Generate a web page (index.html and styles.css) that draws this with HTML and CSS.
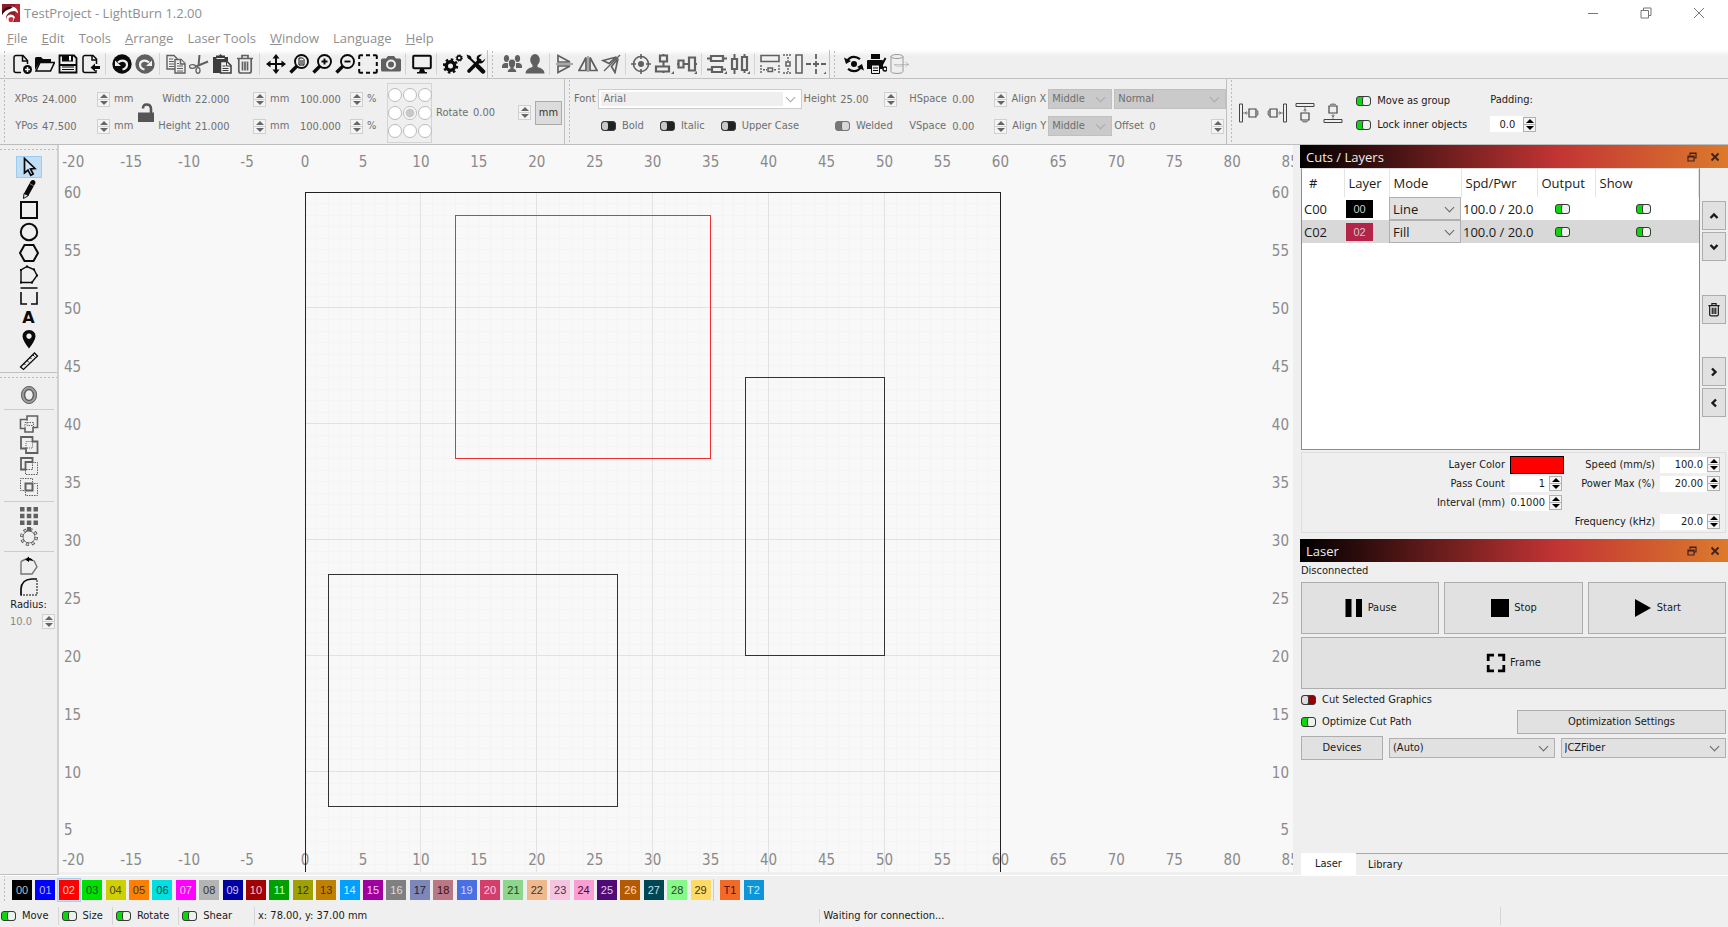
FILE: index.html
```html
<!DOCTYPE html>
<html lang="en">
<head>
  <meta charset="UTF-8" />
  <meta name="viewport" content="width=device-width, initial-scale=1.0" />
  <title>TestProject - LightBurn 1.2.00</title>
  <link rel="stylesheet" href="styles.css">
</head>
<body>
  <!-- icon sprite -->
  <svg class="sprite" aria-hidden="true">
    <symbol id="i-new" viewBox="0 0 20 20"><path d="M9 18.5H4a2 2 0 0 1-2-2v-13a2 2 0 0 1 2-2h7l4.5 5V10M10.5 1.5V7H15" fill="none" stroke="currentColor" stroke-width="1.5"/><circle cx="15.5" cy="15.5" r="4.5" fill="currentColor"/><path d="M15.5 13v5M13 15.5h5" stroke="#efefef" stroke-width="1.5"/></symbol>
    <symbol id="i-open" viewBox="0 0 20 20"><path d="M0 16V4.500q0-1.500 1.500-1.500H6l2 2h8v3H5z" fill="currentColor"/><path d="M1 17 5 8.500H19.500L15.500 17z" fill="none" stroke="currentColor" stroke-width="1.600"/></symbol>
    <symbol id="i-save" viewBox="0 0 20 20"><path d="M1.500 1.500H16l2.500 2.500v14.500h-17z" fill="none" stroke="currentColor" stroke-width="1.800"/><path d="M4 1h11v6.500H4zM1.500 10h17v2h-17z" fill="currentColor"/><path d="M11 2h2v4.500h-2z" fill="#fff"/><path d="M4 13h12M4 15.500h12" stroke="currentColor"/></symbol>
    <symbol id="i-import" viewBox="0 0 20 20"><path d="M15 16v2.500H4a2 2 0 0 1-2-2v-13a2 2 0 0 1 2-2h8L15.500 5v5M11 1.500V6h4" fill="none" stroke="currentColor" stroke-width="1.500"/><path d="M9.500 13.500 14 9.500v2.500h5v3h-5v2.500z" fill="currentColor"/></symbol>
    <symbol id="i-undo" viewBox="0 0 20 20"><circle cx="10" cy="10" r="9.700" fill="currentColor"/><path d="M6 8.500c4-3.500 9-1.500 9 2 0 3-2 4.500-4.500 5" fill="none" stroke="#efefef" stroke-width="2.200"/><path d="M3 6.500V12h6z" fill="#efefef"/></symbol>
    <symbol id="i-redo" viewBox="0 0 20 20"><circle cx="10" cy="10" r="9.700" fill="currentColor"/><path d="M14 8.500c-4-3.500-9-1.500-9 2 0 3 2 4.500 4.500 5" fill="none" stroke="#efefef" stroke-width="2.200"/><path d="M17 6.500V12h-6z" fill="#efefef"/></symbol>
    <symbol id="i-copy" viewBox="0 0 20 20"><g fill="#efefef" stroke="currentColor" stroke-width="1.400"><path d="M1 1.500h7l3 3V15H1z"/><path d="M9 5.500h6l4 4v9.500H9z"/><path d="M14.500 5.500V10H19"/></g><path d="M3 5h4M3 7.500h5M3 10h5M3 12.500h5M11 12h6M11 14.500h6M11 17h6M11 9.500h2" stroke="currentColor"/></symbol>
    <symbol id="i-cut" viewBox="0 0 20 20"><path d="M10.500 1 9.500 12M19 7.500 7 12.500" stroke="currentColor" stroke-width="2"/><ellipse cx="3.500" cy="12.500" rx="3" ry="1.800" fill="none" stroke="currentColor" stroke-width="1.300"/><ellipse cx="9" cy="16.500" rx="2" ry="2.800" fill="none" stroke="currentColor" stroke-width="1.300"/></symbol>
    <symbol id="i-paste" viewBox="0 0 20 20"><path d="M1 3h3V1.500h3L8.500 0 10 1.500h3V3h3v4H8v12H1z" fill="currentColor"/><path d="M4.500 4.500h8" stroke="#efefef"/><path d="M8.500 7.500H15l4 4V19H8.500z" fill="#efefef" stroke="currentColor" stroke-width="1.500"/><path d="M14.500 7.500V12H19M10.500 12h3M10.500 14.500h6M10.500 16.500h6" fill="none" stroke="currentColor"/></symbol>
    <symbol id="i-trash" viewBox="0 0 20 20"><path d="M2 4.500h16M7 4V1.500h6V4M3.800 5v12a2 2 0 0 0 2 2h8.400a2 2 0 0 0 2-2V5M7.500 7.500v9M10 7.500v9M12.500 7.500v9" fill="none" stroke="currentColor" stroke-width="1.700"/></symbol>
    <symbol id="i-move" viewBox="0 0 20 20"><path d="M10 2v16M2 10h16" stroke="currentColor" stroke-width="2"/><path d="m10 0 3.500 4.500h-7zM10 20l-3.500-4.500h7zM0 10l4.500-3.500v7zM20 10l-4.500 3.500v-7z" fill="currentColor"/></symbol>
    <symbol id="i-zoomfit" viewBox="0 0 20 20"><circle cx="12.500" cy="7.500" r="6.500" fill="none" stroke="currentColor" stroke-width="1.900"/><path d="M8 12 1.500 18.500" stroke="currentColor" stroke-width="3.400"/><path d="M10 4h3.500L15 5.500V11h-5zM11 7h3M11 9h3" fill="none" stroke="currentColor"/></symbol>
    <symbol id="i-zoomin" viewBox="0 0 20 20"><circle cx="12.500" cy="7.500" r="6.500" fill="none" stroke="currentColor" stroke-width="1.900"/><path d="M8 12 1.500 18.500" stroke="currentColor" stroke-width="3.400"/><path d="M9.500 7.500h6M12.500 4.500v6" stroke="currentColor" stroke-width="1.900"/></symbol>
    <symbol id="i-zoomout" viewBox="0 0 20 20"><circle cx="12.500" cy="7.500" r="6.500" fill="none" stroke="currentColor" stroke-width="1.900"/><path d="M8 12 1.500 18.500" stroke="currentColor" stroke-width="3.400"/><path d="M9.500 7.500h6" stroke="currentColor" stroke-width="1.900"/></symbol>
    <symbol id="i-marquee" viewBox="0 0 20 20"><path d="M1.200 5V2.200q0-1 1-1H5M8 1.200h4M15 1.200h2.800q1 0 1 1V5M18.800 8v4M18.800 15v2.800q0 1-1 1H15M12 18.800H8M5 18.800H2.200q-1 0-1-1V15M1.200 12V8" fill="none" stroke="currentColor" stroke-width="2"/></symbol>
    <symbol id="i-camera" viewBox="0 0 20 20"><path d="M0 6q0-1.500 1.500-1.500H5L7 2h6l2 2.500h3.500Q20 4.500 20 6v10q0 1.500-1.500 1.500h-17Q0 17.500 0 16z" fill="currentColor"/><circle cx="10" cy="10.500" r="4" fill="currentColor" stroke="#efefef" stroke-width="2"/></symbol>
    <symbol id="i-monitor" viewBox="0 0 20 20"><rect x="1.200" y="1.800" width="17.600" height="12.400" rx="1" fill="none" stroke="currentColor" stroke-width="2"/><path d="M8 15h4l1 3h2v1.500H5V18h2z" fill="currentColor"/></symbol>
    <symbol id="i-gears" viewBox="0 0 20 20"><circle cx="7.500" cy="12" r="4.200" fill="none" stroke="currentColor" stroke-width="3.400"/><circle cx="7.500" cy="12" r="6.600" fill="none" stroke="currentColor" stroke-width="2.200" stroke-dasharray="2.600 2.584"/><circle cx="16.200" cy="4" r="2.100" fill="none" stroke="currentColor" stroke-width="1.700"/><circle cx="16.200" cy="4" r="3.200" fill="none" stroke="currentColor" stroke-width="1" stroke-dasharray="1.200 1.313"/></symbol>
    <symbol id="i-tools" viewBox="0 0 20 20"><path d="M2 2.500 17.500 17.500" stroke="currentColor" stroke-width="2"/><path d="M12 12.500 17 17.500" stroke="currentColor" stroke-width="4.500" stroke-linecap="round"/><path d="M3 17 13.500 6.500" stroke="currentColor" stroke-width="3.600" stroke-linecap="round"/><path d="M19.500 4.500 16.500 7 13.500 6.500 13 3.500 16 .5Q11 0 10.500 4.500L12 9q5 2 7.500-4.500M.5.5l4 1.500 1 2-1.500 1.500-2-1z" fill="currentColor"/></symbol>
    <symbol id="i-users" viewBox="0 0 20 20"><g fill="currentColor"><ellipse cx="4.500" cy="4.500" rx="2.600" ry="3.500"/><ellipse cx="15.500" cy="4.500" rx="2.600" ry="3.500"/><path d="M0 12.500Q0 9.500 3 9h3v5H0zM20 12.500q0-3-3-3.500h-3v5h6z"/></g><path d="M5 18.500q0-3.500 3.300-4.300-2-2.200-2-5Q6.300 5 10 5t3.700 4.200q0 2.800-2 5Q15 15 15 18.500z" fill="currentColor" stroke="#efefef"/></symbol>
    <symbol id="i-user" viewBox="0 0 20 20"><ellipse cx="10" cy="5.800" rx="4.800" ry="5.800" fill="currentColor"/><path d="M7.500 10h5v3q7 1.500 7 6.500H.5q0-5 7-6.500z" fill="currentColor"/></symbol>
    <symbol id="i-flipv" viewBox="0 0 20 20"><path d="M3 1.500 15 8H3zM3 18.500 15 12H3z" fill="none" stroke="currentColor" stroke-width="1.700"/><path d="M1 10h17" stroke="currentColor"/></symbol>
    <symbol id="i-fliph" viewBox="0 0 20 20"><path d="M8 3.500V16.500H1zM12 3.500V16.500h7z" fill="none" stroke="currentColor" stroke-width="1.700"/><path d="M10 2v16" stroke="currentColor"/></symbol>
    <symbol id="i-mirror" viewBox="0 0 20 20"><path d="M2 6.500 15.500 3 8 9.500zM17 4.500 14 18.500l-3.500-6z" fill="none" stroke="currentColor" stroke-width="1.700"/><path d="M19 1 3 17" stroke="currentColor" stroke-width="1.300"/></symbol>
    <symbol id="i-target" viewBox="0 0 20 20"><circle cx="10" cy="10" r="7.500" fill="none" stroke="currentColor" stroke-width="1.600"/><circle cx="10" cy="10" r="3" fill="currentColor"/><path d="M10 0v5M10 15v5M0 10h5M15 10h5" stroke="currentColor" stroke-width="1.600"/></symbol>
    <symbol id="i-alignc" viewBox="0 0 20 20"><path d="M6 1.500h7v6H6zM2 12.500h13v5H2z" fill="none" stroke="currentColor" stroke-width="2.200"/><path d="M9.500 0v2M9.500 7v6M9.500 17v2" stroke="currentColor" stroke-width="2"/><path d="M17 20h3v-3z" fill="currentColor"/></symbol>
    <symbol id="i-alignm" viewBox="0 0 20 20"><path d="M1.500 6.500h5v7h-5zM12 3.500h6v13h-6z" fill="none" stroke="currentColor" stroke-width="2.200"/><path d="M0 10h1.500M6.500 10H12M18 10h2" stroke="currentColor" stroke-width="2"/><path d="M17 20h3v-3z" fill="currentColor"/></symbol>
    <symbol id="i-distv" viewBox="0 0 20 20"><path d="M4 2h12v5H4zM5 13h10v5H5z" fill="none" stroke="currentColor" stroke-width="2.200"/><path d="M0 4.500h4M16 4.500h4M0 15.500h5M15 15.500h4" stroke="currentColor" stroke-width="2"/><path d="M17 20h3v-3z" fill="currentColor"/></symbol>
    <symbol id="i-disth" viewBox="0 0 20 20"><path d="M2 5h5v10H2zM12 3h5v13h-5z" fill="none" stroke="currentColor" stroke-width="2.200"/><path d="M4.500 0v5M4.500 15v5M14.500 0v3M14.500 16v3" stroke="currentColor" stroke-width="2"/><path d="M17 20h3v-3z" fill="currentColor"/></symbol>
    <symbol id="i-samew" viewBox="0 0 20 20"><path d="M1 1.500h18v6H1z" fill="none" stroke="currentColor" stroke-width="1.600"/><path d="M8 14h4.500v3.500H8z" fill="none" stroke="currentColor" stroke-width="1.500"/><path d="M1 11v9M19 11v9M3 15.800h4M14 15.800h3" stroke="currentColor" stroke-width="1.400" stroke-dasharray="2 1"/></symbol>
    <symbol id="i-sameh" viewBox="0 0 20 20"><path d="M13 1h6v18h-6z" fill="none" stroke="currentColor" stroke-width="1.600"/><path d="M3 8h4v4H3z" fill="none" stroke="currentColor" stroke-width="1.500"/><path d="M0 1h9M0 19h9M5 3v4M5 14v4" stroke="currentColor" stroke-width="1.400" stroke-dasharray="2 1"/></symbol>
    <symbol id="i-origin" viewBox="0 0 20 20"><path d="M10 0v5M10 7v6M10 15v5M0 10h5M7 10h6M15 10h5" stroke="currentColor" stroke-width="1.800"/><path d="M17.500 20H20v-2.500z" fill="currentColor"/></symbol>
    <symbol id="i-rotary" viewBox="0 0 20 20"><circle cx="10" cy="10" r="3" fill="currentColor"/><path d="M2.500 8Q5 2.800 10 2.800q3 0 6 2.400M17.500 12q-2.500 5.200-7.500 5.200-3 0-6-2.400" fill="none" stroke="currentColor" stroke-width="2.200"/><path d="M0 3.500 2 10l5-3zM20 16.500 18 10l-5 3z" fill="currentColor"/></symbol>
    <symbol id="i-printcut" viewBox="0 0 20 20"><path d="M4 0h9v5H4zM1 6h14q1 0 1 1v8H0V7q0-1 1-1z" fill="currentColor"/><path d="M4.500 11h8v8.500h-8z" fill="#efefef" stroke="currentColor"/><path d="M6 14h5M6 16.500h5" stroke="currentColor"/><path d="m18.500 4-5 9.500" stroke="currentColor" stroke-width="2"/><circle cx="18" cy="15" r="2" fill="none" stroke="currentColor" stroke-width="1.400"/></symbol>
    <symbol id="i-cyl" viewBox="0 0 20 20"><g fill="none" stroke="currentColor"><ellipse cx="7" cy="2.500" rx="6" ry="2"/><path d="M1 2.500v15q0 2 6 2t6-2v-15"/><path d="M4 10.500h15M15 8l4 2.500-4 2M4 10.500q3 3 9 1" opacity=".5"/></g></symbol>
    <symbol id="i-select" viewBox="0 0 20 20"><path d="M5.500 1.500V16l3.500-3 2.800 5.300 2.400-1.300-2.700-5 4.500-.5z" fill="#cfe6fa" stroke="currentColor" stroke-width="1.700"/></symbol>
    <symbol id="i-pencil" viewBox="0 0 20 20"><path d="m5 14.500 6.500-12q1-2 3-1.500t2 3l-7 12.500z" fill="currentColor"/><path d="m5 14.500-.5 5 5-3z" fill="none" stroke="currentColor"/><path d="m10.500 4.500 4.500 2.500" stroke="#efefef" stroke-width=".5"/></symbol>
    <symbol id="i-rect" viewBox="0 0 20 20"><path d="M2 2h16v16H2z" fill="none" stroke="currentColor" stroke-width="2"/></symbol>
    <symbol id="i-ellipse" viewBox="0 0 20 20"><circle cx="10" cy="10" r="8.200" fill="none" stroke="currentColor" stroke-width="2"/></symbol>
    <symbol id="i-hex" viewBox="0 0 20 20"><path d="M5.500 2h9l4.500 8-4.500 8h-9L1 10z" fill="none" stroke="currentColor" stroke-width="2"/></symbol>
    <symbol id="i-nodes" viewBox="0 0 20 20"><path d="M2 5v12.500h11L18 10.500l-3-6-7-3z" fill="none" stroke="currentColor" stroke-width="1.400"/><path d="M1 4h2v2H1zM7 .5h2v2H7zM14 3.500h2v2h-2zM17 9.500h2v2h-2zM12 16.500h2v2h-2zM1 16.500h2v2H1z" fill="currentColor"/></symbol>
    <symbol id="i-break" viewBox="0 0 20 20"><path d="M1.500 2h17M2 6v12h6M12 18h6V6" fill="none" stroke="currentColor" stroke-width="1.600"/></symbol>
    <symbol id="i-pin" viewBox="0 0 20 20"><path d="M10 1q6.500.5 6.500 6.500Q16 12 10 19.500 4 12 3.500 7.500 3.500 1.500 10 1zm0 3.500a2.700 2.700 0 1 0 .01 0z" fill="currentColor" fill-rule="evenodd"/></symbol>
    <symbol id="i-ruler" viewBox="0 0 20 20"><path d="M1.500 16 15.500 2l3 3L4.500 18.500z" fill="none" stroke="currentColor" stroke-width="1.300"/><path d="m5 12.500 1.500 1.500M8 9.500l2 2M11 6.500l1.500 1.500M14 4l1.500 1.500" stroke="currentColor"/></symbol>
    <symbol id="i-offset" viewBox="0 0 20 20"><ellipse cx="10" cy="10" rx="6" ry="7" fill="none" stroke="#a0a0a0" stroke-width="4"/><ellipse cx="10" cy="10" rx="7.500" ry="8.500" fill="none" stroke="currentColor"/><ellipse cx="10" cy="10" rx="4.500" ry="5.500" fill="none" stroke="currentColor" stroke-width="1.500"/></symbol>
    <symbol id="i-weld" viewBox="0 0 20 20"><path d="M8 2h10.500v11.500H14V18H6v-3.500H1.500V5.500H8z" fill="none" stroke="currentColor" stroke-width="1.600"/><path d="M6 14V8.500h8.500V13.500M8 5.500v6h6" fill="none" stroke="currentColor" stroke-dasharray="1.500 1"/></symbol>
    <symbol id="i-union" viewBox="0 0 20 20"><path d="M2 2h11.500v4.500h5V18H7v-4.500H2z" fill="none" stroke="currentColor" stroke-width="1.800"/><path d="M7 13V6.500h6.500V13z" fill="none" stroke="currentColor" stroke-dasharray="1 1"/></symbol>
    <symbol id="i-subtract" viewBox="0 0 20 20"><path d="M2 2h11.500v4H6.500v7.500H2z" fill="none" stroke="currentColor" stroke-width="1.800"/><path d="M13 6.500h5.500v12H6.500v-5h7V6.500" fill="none" stroke="currentColor" stroke-dasharray="1.500 1"/></symbol>
    <symbol id="i-intersect" viewBox="0 0 20 20"><path d="M6.500 6.500h7v7h-7z" fill="none" stroke="currentColor" stroke-width="2"/><path d="M5 13.500H1.500v-12h12V5M15 6.500h3.500v12h-12V15" fill="none" stroke="currentColor" stroke-dasharray="1.500 1"/></symbol>
    <symbol id="i-grid" viewBox="0 0 20 20"><path d="M1 1h4.500v4.500H1zM7.800 1h4.500v4.500H7.800zM14.500 1H19v4.500h-4.500zM1 7.800h4.500v4.500H1zM7.800 7.800h4.500v4.500H7.800zM14.500 7.800H19v4.500h-4.500zM1 14.500h4.500V19H1zM7.800 14.500h4.500V19H7.800zM14.500 14.500H19V19h-4.500z" fill="currentColor"/></symbol>
    <symbol id="i-circular" viewBox="0 0 20 20"><circle cx="10" cy="10" r="6" fill="none" stroke="currentColor" stroke-width=".8"/><circle cx="10" cy="10" r="7.300" fill="none" stroke="currentColor" stroke-width="3.400" stroke-dasharray="3 2.734"/><circle cx="10" cy="10" r="7.300" fill="none" stroke="#efefef" stroke-width="1.400" stroke-dasharray="1.600 4.134" stroke-dashoffset="-.7"/><path d="M8 0h4v4H8z" fill="currentColor"/></symbol>
    <symbol id="i-start" viewBox="0 0 20 20"><path d="M2 5.500V18h11l5-7-3-6.500M2 5.500 7 3" fill="none" stroke="#777" stroke-width="1.400"/><path d="M6 3.500 10 .5V2q3 0 5 3.500-2-1.500-5-1V6z" fill="#000"/></symbol>
    <symbol id="i-radius" viewBox="0 0 20 20"><path d="M2 18.500V12Q2.500 2.500 12.500 2H18" fill="none" stroke="currentColor" stroke-width="1.700"/><path d="M18 3v15H2" fill="none" stroke="currentColor" stroke-dasharray="2 1"/></symbol>
    <symbol id="i-lock" viewBox="0 0 16 20"><path d="M0 9.500h16V19H0z" fill="currentColor"/><path d="M5 5.500Q5 1.500 8.500 1.500 13 1.500 13 6v4" fill="none" stroke="currentColor" stroke-width="2.600"/></symbol>
    <symbol id="i-dock" viewBox="0 0 20 20"><g fill="none" stroke="currentColor"><path d="M.5 1h3v18h-3z"/><path d="M10 6h7v8h-7z" stroke-width="1.200"/><path d="M4 10h5M8 8.500 6 10l2 1.500M18.500 7v6M20 8v4" opacity=".6"/></g></symbol>
    <symbol id="i-pause" viewBox="0 0 20 20"><path d="M1.500 1h6v18h-6zM12 1h6v18h-6z" fill="currentColor"/></symbol>
    <symbol id="i-stop" viewBox="0 0 20 20"><path d="M1 1h18v18H1z" fill="currentColor"/></symbol>
    <symbol id="i-play" viewBox="0 0 20 20"><path d="M2 1v18l16-9z" fill="currentColor"/></symbol>
    <symbol id="i-frame" viewBox="0 0 20 20"><path d="M2.200 8V2.200H8M12 2.200h5.800V8M17.800 12v5.800H12M8 17.800H2.200V12" fill="none" stroke="currentColor" stroke-width="2.800"/></symbol>
    <symbol id="i-float" viewBox="0 0 10 10"><path d="M3 3V1h6v5H7M1 4h6v5H1zM1 5h6M3 1.500h6" fill="none" stroke="currentColor" stroke-width="1.200"/></symbol>
    <symbol id="i-close" viewBox="0 0 10 10"><path d="m1.500 1.500 7 7M8.500 1.500l-7 7" stroke="currentColor" stroke-width="1.800"/></symbol>
    <symbol id="i-chev" viewBox="0 0 10 10"><path d="M1.500 7 5 3.500 8.500 7" fill="none" stroke="currentColor" stroke-width="2.400"/></symbol>
  </svg>

  <header class="titlebar">
    <svg class="logo" viewBox="0 0 18 18"><path d="M0 0h18v18H0z" fill="#8c1c2c"/><path d="M13 0h5v18h-5z" fill="#b8222e"/><path d="M0 11Q2 4 8 3.500l2-1q6 1 6 7l-3-2.500-4 .5Q5 9 4 13q0 3 2 5H0z" fill="#fff"/><path d="M0 7q4-5.500 11-4L8 5Q3 6 0 11z" fill="#3a0a12"/><path d="M5 18q-2-4 1-6.500Q10 9 13 13l-2 5z" fill="#fff"/><path d="M7.500 18q-2-3 0-4.500 3-1.500 4 1l-1 3.500z" fill="#d22f35"/></svg>
    <span class="app-title">TestProject - LightBurn 1.2.00</span>
    <button class="win" aria-label="Minimize"><svg viewBox="0 0 12 12"><path d="M1 6.500h10"/></svg></button>
    <button class="win" aria-label="Restore"><svg viewBox="0 0 12 12"><path d="M1 3.500h7.500V11H1zM3.500 3.500v-2.500H11v7.500H8.500"/></svg></button>
    <button class="win" aria-label="Close"><svg viewBox="0 0 12 12"><path d="m1 1 10 10M11 1 1 11"/></svg></button>
  </header>

  <nav class="menubar">
    <a href="#"><u>F</u>ile</a><a href="#"><u>E</u>dit</a><a href="#">Tools</a><a href="#"><u>A</u>rrange</a><a href="#">Laser Tools</a><a href="#"><u>W</u>indow</a><a href="#">Language</a><a href="#"><u>H</u>elp</a>
  </nav>

  <div class="toolbars">
    <div class="toolbar main-tools">
      <button aria-label="New"><svg><use href="#i-new"/></svg></button>
      <button aria-label="Open"><svg><use href="#i-open"/></svg></button>
      <button aria-label="Save"><svg><use href="#i-save"/></svg></button>
      <button aria-label="Import"><svg><use href="#i-import"/></svg></button>
      <i class="sep"></i>
      <button aria-label="Undo"><svg><use href="#i-undo"/></svg></button>
      <button class="dim" aria-label="Redo"><svg><use href="#i-redo"/></svg></button>
      <i class="sep"></i>
      <button class="dim" aria-label="Copy"><svg><use href="#i-copy"/></svg></button>
      <button class="dim" aria-label="Cut"><svg><use href="#i-cut"/></svg></button>
      <button class="dark" aria-label="Paste"><svg><use href="#i-paste"/></svg></button>
      <button class="dim" aria-label="Delete"><svg><use href="#i-trash"/></svg></button>
      <i class="sep"></i>
      <button aria-label="Pan"><svg><use href="#i-move"/></svg></button>
      <button aria-label="Zoom to page"><svg><use href="#i-zoomfit"/></svg></button>
      <button aria-label="Zoom in"><svg><use href="#i-zoomin"/></svg></button>
      <button aria-label="Zoom out"><svg><use href="#i-zoomout"/></svg></button>
      <button aria-label="Frame selection"><svg><use href="#i-marquee"/></svg></button>
      <button class="dim" aria-label="Camera"><svg><use href="#i-camera"/></svg></button>
      <i class="sep"></i>
      <button aria-label="Preview"><svg><use href="#i-monitor"/></svg></button>
      <i class="sep"></i>
      <button aria-label="Settings"><svg><use href="#i-gears"/></svg></button>
      <button aria-label="Device settings"><svg><use href="#i-tools"/></svg></button>
    </div>
    <div class="toolbar arrange-tools">
      <button aria-label="Group"><svg><use href="#i-users"/></svg></button>
      <button aria-label="Ungroup"><svg><use href="#i-user"/></svg></button>
      <i class="sep"></i>
      <button aria-label="Flip vertical"><svg><use href="#i-flipv"/></svg></button>
      <button aria-label="Flip horizontal"><svg><use href="#i-fliph"/></svg></button>
      <button aria-label="Mirror across line"><svg><use href="#i-mirror"/></svg></button>
      <i class="sep"></i>
      <button aria-label="Align centers"><svg><use href="#i-target"/></svg></button>
      <button aria-label="Align vertical"><svg><use href="#i-alignc"/></svg></button>
      <button aria-label="Align horizontal"><svg><use href="#i-alignm"/></svg></button>
      <i class="sep"></i>
      <button aria-label="Distribute vertical"><svg><use href="#i-distv"/></svg></button>
      <button aria-label="Distribute horizontal"><svg><use href="#i-disth"/></svg></button>
      <i class="sep"></i>
      <button aria-label="Same width"><svg><use href="#i-samew"/></svg></button>
      <button aria-label="Same height"><svg><use href="#i-sameh"/></svg></button>
      <button aria-label="Move to origin"><svg><use href="#i-origin"/></svg></button>
    </div>
    <div class="toolbar laser-tools">
      <button aria-label="Rotary"><svg><use href="#i-rotary"/></svg></button>
      <button aria-label="Print and cut"><svg><use href="#i-printcut"/></svg></button>
      <button class="pale" aria-label="Cylinder"><svg><use href="#i-cyl"/></svg></button>
    </div>
  </div>

  <div class="props">
    <section class="prop-block numeric">
      <div class="pos">
        <label for="xpos">XPos</label><div class="num"><input id="xpos" value="24.000"></div><span>mm</span>
        <label for="ypos">YPos</label><div class="num"><input id="ypos" value="47.500"></div><span>mm</span>
      </div>
      <button class="lock" aria-label="Lock aspect ratio"><svg><use href="#i-lock"/></svg></button>
      <div class="size">
        <label for="w">Width</label><div class="num"><input id="w" value="22.000"></div><span>mm</span><div class="num"><input aria-label="Width percent" value="100.000"></div><span>%</span>
        <label for="h">Height</label><div class="num"><input id="h" value="21.000"></div><span>mm</span><div class="num"><input aria-label="Height percent" value="100.000"></div><span>%</span>
      </div>
      <div class="anchors">
        <input type="radio" name="anchor" aria-label="Top left"><input type="radio" name="anchor" aria-label="Top"><input type="radio" name="anchor" aria-label="Top right">
        <input type="radio" name="anchor" aria-label="Left"><input type="radio" name="anchor" aria-label="Center" checked><input type="radio" name="anchor" aria-label="Right">
        <input type="radio" name="anchor" aria-label="Bottom left"><input type="radio" name="anchor" aria-label="Bottom"><input type="radio" name="anchor" aria-label="Bottom right">
      </div>
      <div class="rotate"><label for="rot">Rotate</label><div class="num"><input id="rot" value="0.00"></div></div>
      <button class="unit">mm</button>
    </section>

    <section class="prop-block text-props">
      <div class="font-col">
        <div class="line">
          <label for="font">Font</label>
          <div class="select font-select"><select id="font"><option>Arial</option></select></div>
          <label for="fh">Height</label><div class="num"><input id="fh" value="25.00"></div>
        </div>
        <div class="line checks">
          <label><input type="checkbox" class="tg off">Bold</label>
          <label><input type="checkbox" class="tg off">Italic</label>
          <label><input type="checkbox" class="tg off">Upper Case</label>
          <label class="welded"><input type="checkbox" class="tg gray" checked>Welded</label>
        </div>
      </div>
      <div class="spacing">
        <label for="hs">HSpace</label><div class="num"><input id="hs" value="0.00"></div>
        <label for="vs">VSpace</label><div class="num"><input id="vs" value="0.00"></div>
      </div>
      <div class="align">
        <label for="ax">Align X</label><div class="select muted"><select id="ax"><option>Middle</option></select></div>
        <div class="select muted"><select aria-label="Text mode"><option>Normal</option></select></div>
        <label for="ay">Align Y</label><div class="select muted"><select id="ay"><option>Middle</option></select></div>
        <div class="offset"><label for="off">Offset</label><div class="num"><input id="off" value="0"></div></div>
      </div>
    </section>

    <section class="prop-block dock-props">
      <button aria-label="Dock left"><svg><use href="#i-dock"/></svg></button>
      <button aria-label="Dock right" class="r180"><svg><use href="#i-dock"/></svg></button>
      <button aria-label="Dock top" class="r90"><svg><use href="#i-dock"/></svg></button>
      <button aria-label="Dock bottom" class="r270"><svg><use href="#i-dock"/></svg></button>
      <div class="dock-checks">
        <label><input type="checkbox" class="tg" checked>Move as group</label>
        <label><input type="checkbox" class="tg" checked>Lock inner objects</label>
      </div>
      <div class="padding">
        <label for="pad">Padding:</label>
        <div class="num white"><input id="pad" value="0.0"></div>
      </div>
    </section>
  </div>

  <main class="workspace">
    <aside class="side-tools">
      <div class="tool-list draw">
        <button class="active" aria-label="Select"><svg><use href="#i-select"/></svg></button>
        <button aria-label="Draw lines"><svg><use href="#i-pencil"/></svg></button>
        <button aria-label="Rectangle"><svg><use href="#i-rect"/></svg></button>
        <button aria-label="Ellipse"><svg><use href="#i-ellipse"/></svg></button>
        <button aria-label="Polygon"><svg><use href="#i-hex"/></svg></button>
        <button aria-label="Edit nodes"><svg><use href="#i-nodes"/></svg></button>
        <button aria-label="Trim shapes"><svg><use href="#i-break"/></svg></button>
        <button aria-label="Text" class="text-tool">A</button>
        <button aria-label="Position laser"><svg><use href="#i-pin"/></svg></button>
        <button aria-label="Measure"><svg><use href="#i-ruler"/></svg></button>
      </div>
      <div class="tool-list edit">
        <button aria-label="Offset shapes"><svg><use href="#i-offset"/></svg></button>
        <hr>
        <button aria-label="Weld"><svg><use href="#i-weld"/></svg></button>
        <button aria-label="Boolean union"><svg><use href="#i-union"/></svg></button>
        <button aria-label="Boolean subtract"><svg><use href="#i-subtract"/></svg></button>
        <button aria-label="Boolean intersection"><svg><use href="#i-intersect"/></svg></button>
        <hr>
        <button aria-label="Grid array"><svg><use href="#i-grid"/></svg></button>
        <button aria-label="Circular array"><svg><use href="#i-circular"/></svg></button>
        <hr>
        <button aria-label="Set start point"><svg><use href="#i-start"/></svg></button>
        <button aria-label="Radius"><svg><use href="#i-radius"/></svg></button>
        <label for="radius">Radius:</label>
        <div class="num"><input id="radius" value="10.0"></div>
      </div>
    </aside>

    <svg class="canvas" id="canvas"></svg>

    <aside class="docks">
      <h2 class="dock-title"><span>Cuts / Layers</span><button aria-label="Float"><svg><use href="#i-float"/></svg></button><button aria-label="Close"><svg><use href="#i-close"/></svg></button></h2>
      <div class="cuts">
        <div class="layer-box">
          <table class="layers">
            <colgroup><col class="c-id"><col class="c-layer"><col class="c-mode"><col class="c-spd"><col class="c-out"><col></colgroup>
            <tr><th>#</th><th>Layer</th><th>Mode</th><th>Spd/Pwr</th><th>Output</th><th>Show</th></tr>
            <tr>
              <td>C00</td><td><span class="chip black">00</span></td>
              <td><div class="select"><select aria-label="Mode C00"><option>Line</option></select></div></td>
              <td>100.0 / 20.0</td>
              <td class="mid"><input type="checkbox" class="tg" aria-label="Output C00" checked></td>
              <td class="show"><input type="checkbox" class="tg" aria-label="Show C00" checked></td>
            </tr>
            <tr class="current">
              <td>C02</td><td><span class="chip crimson">02</span></td>
              <td><div class="select"><select aria-label="Mode C02"><option>Fill</option></select></div></td>
              <td>100.0 / 20.0</td>
              <td class="mid"><input type="checkbox" class="tg" aria-label="Output C02" checked></td>
              <td class="show"><input type="checkbox" class="tg" aria-label="Show C02" checked></td>
            </tr>
          </table>
        </div>
        <div class="layer-buttons">
          <button aria-label="Move up"><svg><use href="#i-chev"/></svg></button>
          <button aria-label="Move down"><svg class="r180"><use href="#i-chev"/></svg></button>
          <button aria-label="Delete layer" class="del"><svg><use href="#i-trash"/></svg></button>
          <button aria-label="Next"><svg class="r90"><use href="#i-chev"/></svg></button>
          <button aria-label="Previous"><svg class="r270"><use href="#i-chev"/></svg></button>
        </div>
      </div>
      <div class="cut-form">
        <label for="lc">Layer Color</label><button id="lc" class="color" aria-label="Layer Color"></button>
        <label for="spd">Speed (mm/s)</label><div class="num white"><input id="spd" value="100.0"></div>
        <label for="pc">Pass Count</label><div class="num white"><input id="pc" value="1"></div>
        <label for="pw">Power Max (%)</label><div class="num white"><input id="pw" value="20.00"></div>
        <label for="iv">Interval (mm)</label><div class="num white"><input id="iv" value="0.1000"></div>
        <label for="fq" class="freq">Frequency (kHz)</label><div class="num white freq-num"><input id="fq" value="20.0"></div>
      </div>

      <h2 class="dock-title"><span>Laser</span><button aria-label="Float"><svg><use href="#i-float"/></svg></button><button aria-label="Close"><svg><use href="#i-close"/></svg></button></h2>
      <div class="laser">
        <p>Disconnected</p>
        <div class="run">
          <button class="btn big"><svg><use href="#i-pause"/></svg>Pause</button>
          <button class="btn big"><svg><use href="#i-stop"/></svg>Stop</button>
          <button class="btn big"><svg><use href="#i-play"/></svg>Start</button>
          <button class="btn big wide"><svg><use href="#i-frame"/></svg>Frame</button>
        </div>
        <div class="opt"><label><input type="checkbox" class="tg red">Cut Selected Graphics</label></div>
        <div class="opt"><label><input type="checkbox" class="tg" checked>Optimize Cut Path</label><button class="btn">Optimization Settings</button></div>
        <div class="devices">
          <button class="btn">Devices</button>
          <div class="select"><select aria-label="Port"><option>(Auto)</option></select></div>
          <div class="select"><select aria-label="Device"><option>JCZFiber</option></select></div>
        </div>
      </div>
      <div class="tabs"><button class="on">Laser</button><button>Library</button></div>
    </aside>
  </main>

  <div class="palette">
    <div class="swatches" id="swatches"></div>
    <div class="swatches tool-layers" id="toolLayers"></div>
  </div>

  <footer class="status">
    <label><input type="checkbox" class="tg" checked>Move</label>
    <label><input type="checkbox" class="tg" checked>Size</label>
    <label><input type="checkbox" class="tg" checked>Rotate</label>
    <label><input type="checkbox" class="tg" checked>Shear</label>
    <span class="coords">x: 78.00, y: 37.00 mm</span>
    <span class="message">Waiting for connection...</span>
    <span class="progress"></span>
  </footer>

  <script src="app.js"></script>
</body>
</html>
```

FILE: styles.css
```css
* {
  box-sizing: border-box;
}

body {
  margin: 0;
  height: 100vh;
  display: flex;
  flex-direction: column;
  background: #efefef;
  color: #1a1a1a;
  font-family: "DejaVu Sans Condensed", "DejaVu Sans", sans-serif;
  font-size: 11px;
  line-height: 14px;
  overflow: hidden;
}

button, input, select {
  font: inherit;
  color: inherit;
  margin: 0;
  padding: 0;
  border: 0;
  border-radius: 0;
  background: none;
}

.sprite {
  position: absolute;
  width: 0;
  height: 0;
}

/* title and menu */
.titlebar {
  display: flex;
  align-items: center;
  height: 26px;
  padding: 0 3px 0 2px;
  background: #fff;
  color: #8f8f8f;
  font: 13px "Open Sans", sans-serif;
}

.logo {
  width: 18px;
  height: 18px;
}

.app-title {
  flex: 1;
  padding-left: 4px;
}

.win {
  width: 53px;
  height: 26px;
}

.win svg {
  width: 12px;
  height: 12px;
  fill: none;
  stroke: #777;
  display: block;
  margin: auto;
}

.menubar {
  display: flex;
  gap: 14px;
  height: 24px;
  padding-left: 7px;
  background: #fff;
  font: 13px/24px "Open Sans", sans-serif;
}

.menubar a {
  color: #8f8f8f;
  text-decoration: none;
}

/* top toolbars */
.toolbars {
  display: flex;
  height: 29px;
  background: linear-gradient(#fff, #efefef 6px);
  border-bottom: 1px solid #c0c0c0;
}

.toolbar {
  display: flex;
  align-items: center;
  padding-left: 10px;
  background: radial-gradient(#bbb 1px, transparent 1px) 3px 4px;
  background-size: 3px 4px;
  background-repeat: repeat-y;
}

.toolbar button {
  width: 23px;
  height: 26px;
}

.toolbar svg {
  display: block;
  width: 20px;
  height: 20px;
  margin: auto;
  overflow: visible;
}

.toolbar button,
.side-tools button {
  color: #0a0a0a;
}

.toolbar .dim,
.arrange-tools button {
  color: #606060;
}

.toolbar .dark {
  color: #3c3c3c;
}

.toolbar .pale {
  color: #999;
}

.sep {
  width: 1px;
  height: 22px;
  background: #d4d4d4;
}

.main-tools .sep {
  margin: 0 4px 0 3px;
}

.arrange-tools .sep {
  margin: 0 3px;
}

.main-tools,
.arrange-tools {
  border-right: 1px solid #c0c0c0;
}

.arrange-tools {
  padding-right: 2px;
  padding-left: 12px;
}

.laser-tools {
  padding-left: 12px;
}

/* numeric fields */
.num {
  display: flex;
  align-items: center;
}

.num input {
  flex: 1;
  width: 100%;
  min-width: 0;
  height: 16px;
}

.spin {
  width: 13px;
  height: 15px;
  display: flex;
  flex-direction: column;
  background: #f4f4f4;
  border: 1px solid #d0d0d0;
}

.spin button {
  flex: 1;
}

.spin button + button {
  border-top: 1px solid #d0d0d0;
}

.spin button::after {
  content: "";
  display: block;
  width: 0;
  height: 0;
  margin: auto;
  border: 4px solid transparent;
  border-top-width: 0;
  border-bottom: 4px solid #666;
}

.spin button + button::after {
  border-top: 4px solid #666;
  border-bottom-width: 0;
}

.white input {
  background: #fff;
  text-align: right;
  padding-right: 4px;
}

.white .spin,
.white .spin button + button {
  border-color: #b0b0b0;
}

.white .spin button::after {
  border-bottom-color: #000;
}

.white .spin button + button::after {
  border-top-color: #000;
}

/* drop-downs */
.select {
  position: relative;
  background: #e1e1e1;
  border: 1px solid #b0b0b0;
}

.select select {
  appearance: none;
  width: 100%;
  height: 18px;
  padding-left: 3px;
  display: block;
}

.select::after {
  content: "";
  position: absolute;
  right: 7px;
  top: 50%;
  width: 6px;
  height: 6px;
  margin-top: -5px;
  border: solid #666;
  border-width: 0 1px 1px 0;
  transform: rotate(45deg);
  pointer-events: none;
}

/* sliding tick boxes */
.tg {
  appearance: none;
  flex: none;
  display: flex;
  width: 15px;
  height: 10px;
  border: 1px solid #3a3a3a;
  border-radius: 3px;
  background: #222;
  overflow: hidden;
}

.tg::before {
  content: "";
  width: 6px;
  height: 8px;
  border-radius: 2px;
  background: #c8c8c8;
}

.tg:checked {
  justify-content: flex-end;
  background: #0bd80b;
}

.tg:checked::before {
  width: 7px;
  border-left: 1px solid #3a3a3a;
  background: #f0f0f0;
}

.tg.gray:checked {
  border-color: #777;
  background: #777;
}

.tg.gray:checked::before {
  border-color: #666;
  background: #d8d8d8;
}

.tg.red {
  background: #900;
}

.tg.red::before {
  border-right: 1px solid #3a3a3a;
  background: #ddd;
}

/* property bar */
.props {
  display: flex;
  height: 66px;
  border-bottom: 1px solid #bdbdbd;
  color: #6e6e6e;
}

.prop-block {
  display: flex;
  align-items: center;
  padding-top: 2px;
  padding-left: 9px;
  border-right: 1px solid #c0c0c0;
  background: radial-gradient(#bbb 1px, transparent 1px) 3px 4px;
  background-size: 3px 4px;
  background-repeat: repeat-y;
}

.pos, .size, .spacing, .align {
  display: grid;
  grid-auto-rows: 27px;
  align-items: center;
}

.pos > label, .size > label, .align > label {
  text-align: right;
}

.pos {
  grid-template-columns: 29px 72px 24px;
}

.pos .num, .size .num {
  padding-left: 4px;
}

.pos > span, .size > span {
  padding-left: 4px;
}

.lock {
  width: 18px;
  height: 20px;
  margin-left: 3px;
  color: #555;
}

.lock svg {
  width: 18px;
  height: 20px;
  display: block;
}

.size {
  grid-template-columns: 36px 75px 30px 67px 15px;
}

.anchors {
  display: grid;
  grid-template-columns: repeat(3, 15px);
  grid-auto-rows: 18px;
  align-content: center;
  align-items: center;
  width: 45px;
  height: 60px;
  margin: 0 4px 0 9px;
  border: 1px solid #d4d4d4;
}

.anchors input {
  appearance: none;
  width: 14px;
  height: 14px;
  border: 1px solid #bbb;
  border-radius: 50%;
  background: #fff;
}

.anchors input:checked {
  background: radial-gradient(#c8c8c8 4px, #fff 5px);
}

.rotate {
  display: grid;
  grid-template-columns: 37px 58px;
  align-items: center;
}

.unit {
  width: 27px;
  height: 24px;
  margin: 0 2px 0 4px;
  background: #dcdcdc;
  border: 1px solid #aaa;
  color: #333;
}

.text-props .line {
  display: flex;
  align-items: center;
  height: 27px;
}

.font-select {
  width: 204px;
  margin: 0 2px;
  background: #fff;
  border-color: #ccc;
}

.font-select select {
  width: 182px;
  height: 14px;
  margin: 2px;
  background: #efefef;
}

.select.font-select::after,
.select.muted::after {
  border-color: #aaa;
}

.line .num {
  width: 61px;
  padding-left: 4px;
}

.checks label,
.dock-checks label,
.opt label,
.status label {
  display: flex;
  align-items: center;
  gap: 6px;
}

.text-props .checks {
  gap: 16px;
  padding-left: 27px;
}

.checks .welded {
  margin-left: 20px;
}

.spacing {
  grid-template-columns: 39px 59px;
  margin-left: 12px;
}

.spacing .num {
  padding-left: 4px;
}

.align {
  grid-template-columns: 37px 64px 112px;
  column-gap: 2px;
  margin-left: 2px;
}

.select.muted {
  background: #cacaca;
  border-color: #c0c0c0;
}

.offset {
  display: grid;
  grid-template-columns: 35px 75px;
  align-items: center;
}

.dock-props {
  flex: 1;
  border-right: 0;
  padding-left: 12px;
  gap: 8px;
}

.dock-props > button {
  width: 20px;
  height: 20px;
  color: #444;
}

.dock-props svg {
  width: 20px;
  height: 20px;
  display: block;
  overflow: visible;
}

.r180 { transform: rotate(180deg); }
.r90 { transform: rotate(90deg); }
.r270 { transform: rotate(270deg); }

.dock-checks {
  display: grid;
  gap: 10px;
  margin-left: 5px;
  color: #1a1a1a;
}

.padding {
  display: grid;
  gap: 9px;
  margin-left: 15px;
  color: #1a1a1a;
}

.padding .num {
  width: 46px;
}

.padding input {
  padding-right: 8px;
}

/* workspace */
.workspace {
  flex: 1;
  display: flex;
  min-height: 0;
}

.side-tools {
  width: 59px;
  border-right: 2px solid #d0d0d0;
  border-bottom: 1px solid #c0c0c0;
}

.tool-list {
  display: grid;
  grid-auto-rows: 1fr;
  justify-items: center;
  padding-top: 12px;
  background: radial-gradient(#bbb 1px, transparent 1px) 3px 3px;
  background-size: 4px 3px;
  background-repeat: repeat-x;
}

.draw {
  height: 228px;
  border-bottom: 1px solid #c0c0c0;
}

.side-tools svg {
  width: 20px;
  height: 20px;
  display: block;
  margin: auto;
}

.side-tools .tool-list > button {
  width: 24px;
  height: 20px;
}

.side-tools .active {
  background: #c2def5;
  outline: 1px solid #99cdf2;
}

.side-tools .text-tool {
  font: bold 16px/20px "DejaVu Sans", sans-serif;
}

.edit {
  grid-auto-rows: auto;
  row-gap: 1px;
}

.edit > button:not(:nth-last-child(-n+4)) {
  color: #606060;
}

.edit hr {
  width: 50px;
  margin: 3px 0;
  border: 0;
  border-top: 1px solid #ccc;
}

.edit .num {
  justify-self: end;
  width: 45px;
  margin-right: 2px;
  color: #888;
}

.canvas {
  flex: 1;
  min-width: 0;
  height: calc(100% - 3px);
  background: #f8f8f8;
  font-size: 15px;
}

.canvas text {
  fill: #8a8a8a;
}

.canvas line, .canvas rect {
  fill: none;
  shape-rendering: crispEdges;
}

.minor { stroke: #f4f4f4; }
.major { stroke: #e2e2e2; }
.bed { stroke: #222; }
.shape { stroke: #333; }
.selected { stroke: #f03030; }

/* right-hand docks */
.docks {
  width: 428px;
  margin-left: 7px;
  display: flex;
  flex-direction: column;
}

.dock-title {
  display: flex;
  align-items: center;
  gap: 13px;
  height: 23px;
  margin: 0;
  padding: 0 8px 0 6px;
  color: #eee;
  background: linear-gradient(90deg, #000, #c23434 60%, #dc7a2c);
  font: 13px "Open Sans", sans-serif;
}

.dock-title span {
  flex: 1;
}

.dock-title button {
  width: 10px;
  height: 10px;
  color: #40201c;
}

.dock-title svg {
  width: 10px;
  height: 10px;
  display: block;
}

.cuts {
  display: flex;
  gap: 2px;
}

.layer-box {
  flex: 1;
  height: 282px;
  margin-left: 1px;
  background: #fff;
  border: 1px solid #8c8c8c;
  border-top-color: #ddd;
}

.layers {
  width: 100%;
  table-layout: fixed;
  border-collapse: collapse;
  font: 13px/18px "Open Sans", sans-serif;
}

.c-id { width: 42px; }
.c-layer { width: 45px; }
.c-mode { width: 72px; }
.c-spd { width: 76px; }
.c-out { width: 58px; }

.layers th {
  height: 28px;
  padding: 0 0 0 4px;
  font-weight: normal;
  text-align: left;
  border-right: 1px solid #e4e4e4;
}

.layers th:first-child {
  padding-left: 7px;
}

.layers td {
  height: 23px;
  padding: 0 0 0 2px;
  white-space: nowrap;
}

.layers td:nth-child(3) {
  padding: 0;
}

.layers .select {
  height: 23px;
}

.layers .select select {
  height: 21px;
}

.current {
  background: #d8d8d8;
}

.layers .mid {
  padding-left: 18px;
}

.layers .show {
  padding-left: 41px;
}

.chip {
  display: block;
  width: 27px;
  height: 18px;
  color: #ccc;
  font: 11px/18px "Liberation Sans", sans-serif;
  text-align: center;
}

.black { background: #000; }
.crimson { background: #b32448; }

.layer-buttons {
  width: 24px;
  margin-right: 2px;
  padding-top: 33px;
}

.layer-buttons button {
  display: block;
  width: 24px;
  height: 29px;
  margin-bottom: 2px;
  background: #e1e1e1;
  border: 1px solid #adadad;
}

.layer-buttons button.del {
  margin: 34px 0 33px;
}

.layer-buttons svg {
  width: 10px;
  height: 10px;
  display: block;
  margin: auto;
}

.layer-buttons .del svg {
  width: 14px;
  height: 15px;
}

.cut-form {
  display: grid;
  grid-template-columns: 1fr 54px 86px 62px;
  grid-auto-rows: 19px;
  align-items: center;
  column-gap: 5px;
  margin: 2px 2px 6px 1px;
  padding: 2px 3px 1px 0;
  border: 1px solid #dedede;
}

.cut-form label {
  text-align: right;
}

.cut-form .num {
  margin-right: 2px;
}

.cut-form .freq {
  grid-area: 4 / 3;
}

.freq-num {
  grid-area: 4 / 4;
}

.color {
  height: 18px;
  background: #f00;
  border: 1px solid #000;
}

.laser {
  flex: 1;
  padding: 2px 2px 0 1px;
}

.laser p {
  margin: 0 0 4px;
}

.btn {
  height: 24px;
  background: #e1e1e1;
  border: 1px solid #adadad;
}

.run {
  display: grid;
  grid-template-columns: repeat(3, 1fr);
  gap: 3px 5px;
}

.big {
  display: flex;
  align-items: center;
  justify-content: center;
  gap: 4px;
  height: 52px;
}

.big svg {
  width: 20px;
  height: 20px;
  color: #000;
}

.wide {
  grid-column: 1 / -1;
}

.opt {
  display: flex;
  align-items: center;
  justify-content: space-between;
  height: 22px;
}

.opt .btn {
  width: 209px;
}

.devices {
  display: grid;
  grid-template-columns: 82px 1fr 1fr;
  align-items: center;
  gap: 6px;
  margin-top: 3px;
}

.tabs {
  display: flex;
  height: 22px;
  padding-left: 1px;
}

.tabs button {
  flex: 1;
  padding-left: 12px;
  text-align: left;
  border-top: 1px solid #aaa;
}

.tabs .on {
  flex: none;
  width: 55px;
  padding: 0;
  text-align: center;
  background: #fff;
  border: 0;
}

/* layer palette */
.palette {
  display: flex;
  align-items: center;
  height: 28px;
  padding-left: 11px;
  border-top: 1px solid #fff;
  background: radial-gradient(#bbb 1px, transparent 1px) 3px 2px;
  background-size: 3px 4px;
  background-repeat: repeat-y;
}

.swatches {
  display: grid;
  grid-template-columns: repeat(30, 1fr);
  width: 702px;
}

.tool-layers {
  grid-template-columns: repeat(2, 1fr);
  width: 53px;
  padding-left: 5px;
  border-left: 1px solid #ccc;
}

.swatches button {
  width: 22px;
  height: 22px;
  padding: 0;
  border: 1px solid #efefef;
  font: 11px/20px "Liberation Sans", sans-serif;
}

.swatches .current-color {
  border-color: #c8e2f8;
  outline: 1px solid #a8cdf0;
}

/* status bar */
.status {
  display: flex;
  align-items: center;
  height: 24px;
  padding-top: 2px;
  padding-left: 1px;
}

.status label {
  height: 18px;
  padding-right: 9px;
  margin-right: 3px;
  border-right: 1px solid #d6d6d6;
}

.status label:nth-child(4) {
  padding-right: 22px;
}

.coords {
  flex: 563 1 0;
}

.message {
  flex: 678 1 0;
  padding-left: 3px;
  border-left: 1px solid #d6d6d6;
}

.progress {
  flex: 228 1 0;
  height: 18px;
  border-left: 1px solid #d6d6d6;
}
```

FILE: app.js
```js
// up/down arrows for every numeric field
document.querySelectorAll('.num').forEach(field => {
  const input = field.querySelector('input');
  const spin = document.createElement('span');
  spin.className = 'spin';
  [1, -1].forEach(dir => {
    const b = document.createElement('button');
    b.setAttribute('aria-label', dir > 0 ? 'Increase' : 'Decrease');
    b.onclick = () => {
      const digits = (input.value.split('.')[1] || '').length;
      input.value = (parseFloat(input.value) + dir).toFixed(digits);
    };
    spin.appendChild(b);
  });
  field.appendChild(spin);
});

// layer palette: background and text colour
const colors = [
  ['#000', '#bbb'], ['#00f', '#bbf'], ['#f00', '#fcc'], ['#00e000', '#242'], ['#d0d000', '#442'],
  ['#ff8000', '#431'], ['#00e0e0', '#144'], ['#f0f', '#fcf'], ['#b4b4b4', '#333'], ['#0000a0', '#ccf'],
  ['#a00000', '#fcc'], ['#00a000', '#cfc'], ['#a0a000', '#331'], ['#c08000', '#431'], ['#00a0ff', '#def'],
  ['#a000a0', '#fcf'], ['#808080', '#ddd'], ['#7d87b9', '#223'], ['#bb7784', '#311'], ['#4a6fe3', '#cdf'],
  ['#d33f6a', '#fcd'], ['#8cd78c', '#242'], ['#f0b98d', '#432'], ['#f6c4e1', '#434'], ['#fa9ed4', '#413'],
  ['#500a78', '#dce'], ['#b45a00', '#fdc'], ['#004754', '#cde'], ['#86fa88', '#242'], ['#ffdb66', '#431']
];

function addSwatch(parent, label, bg, fg) {
  const b = document.createElement('button');
  b.textContent = label;
  b.style.backgroundColor = bg;
  b.style.color = fg;
  if (label === '02') b.className = 'current-color';
  parent.appendChild(b);
}

const swatches = document.getElementById('swatches');
colors.forEach((c, i) => addSwatch(swatches, String(i).padStart(2, '0'), c[0], c[1]));
const toolLayers = document.getElementById('toolLayers');
addSwatch(toolLayers, 'T1', '#f36926', '#411');
addSwatch(toolLayers, 'T2', '#0c96d9', '#cef');

// work area
const canvas = document.getElementById('canvas');
const UNIT = 11.59;
const LEFT = 246;
const TOP = 47;
const BED = 60;
const px = x => LEFT + x * UNIT;
const py = y => TOP + (BED - y) * UNIT;

function draw() {
  const w = canvas.clientWidth;
  const h = canvas.clientHeight;
  let out = '';
  const line = (x1, y1, x2, y2, cls) => {
    out += `<line x1="${x1}" y1="${y1}" x2="${x2}" y2="${y2}" class="${cls}"/>`;
  };
  const text = (x, y, anchor, s) => {
    out += `<text x="${x}" y="${y}" text-anchor="${anchor}">${s}</text>`;
  };
  const rect = (x1, y1, x2, y2, cls) => {
    out += `<rect x="${px(x1)}" y="${py(y2)}" width="${(x2 - x1) * UNIT}" height="${(y2 - y1) * UNIT}" class="${cls}"/>`;
  };

  ['minor', 'major'].forEach(cls => {
    for (let i = 1; i < BED; i++) {
      if ((i % 10 === 0) !== (cls === 'major')) continue;
      line(px(i), TOP, px(i), h, cls);
      line(px(0), py(i), px(BED), py(i), cls);
    }
  });

  for (let x = -20; px(x) < w + 10; x += 5) {
    text(px(x), 22, 'middle', x);
    text(px(x), h - 7, 'middle', x);
  }
  for (let y = 5; y <= BED; y += 5) {
    text(5, py(y) + 6, 'start', y);
    text(w - 4, py(y) + 6, 'end', y);
  }

  rect(0, 0, BED, BED, 'bed');
  rect(2, 7, 27, 27, 'shape');
  rect(38, 20, 50, 44, 'shape');
  rect(13, 37, 35, 58, 'selected');
  canvas.innerHTML = out;
}

draw();
window.addEventListener('resize', draw);
```
